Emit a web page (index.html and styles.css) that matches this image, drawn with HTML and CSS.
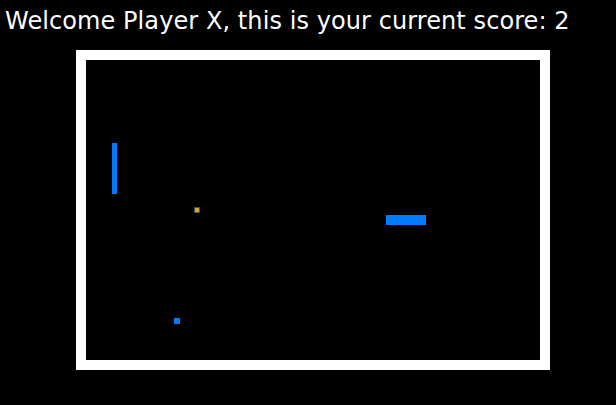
FILE: index.html
```html
<!DOCTYPE html>
<html>
<head>
<meta charset="utf-8">
<link rel="stylesheet" href="styles.css">
</head>
<body>
<div class="page">
  <h1 class="welcome">Welcome Player X, this is your current score: 2</h1>
  <div class="board">
    <div class="field">
      <div class="paddle paddle-left"></div>
      <div class="ball"></div>
      <div class="paddle paddle-right"></div>
      <div class="dot"></div>
    </div>
  </div>
</div>
</body>
</html>
```

FILE: styles.css
```css
html, body {
  margin: 0;
  padding: 0;
  background: #000;
  height: 100%;
}
.page {
  padding: 0 0 0 5px;
}
.welcome {
  margin: 0;
  height: 50px;
  padding-top: 6px;
  box-sizing: border-box;
  font-family: "Comic Sans MS", "DejaVu Sans", sans-serif;
  font-weight: normal;
  font-size: 24px;
  letter-spacing: 0.08px;
  line-height: 31px;
  color: #fff;
  white-space: nowrap;
}
.board {
  margin-left: 71px;
  width: 474px;
  height: 320px;
  box-sizing: border-box;
  border: 10px solid #fff;
  background: #000;
}
.field {
  position: relative;
  width: 100%;
  height: 100%;
}
.paddle, .ball, .dot {
  position: absolute;
}
.paddle-left {
  left: 26px;
  top: 83px;
  width: 5px;
  height: 51px;
  background: #007bff;
}
.paddle-right {
  left: 300px;
  top: 155px;
  width: 40px;
  height: 10px;
  background: #007bff;
}
.ball {
  left: 108px;
  top: 147px;
  width: 6px;
  height: 6px;
  box-sizing: border-box;
  border: 1px solid #2c5a50;
  background: #d9a43a;
}
.dot {
  left: 88px;
  top: 258px;
  width: 6px;
  height: 6px;
  background: #007bff;
}
```
